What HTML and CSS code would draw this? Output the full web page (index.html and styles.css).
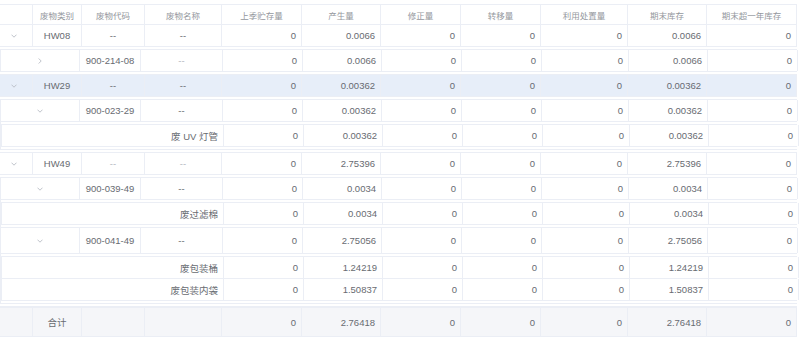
FILE: index.html
```html
<!DOCTYPE html>
<html lang="zh">
<head>
<meta charset="utf-8">
<link rel="stylesheet" href="styles.css">
</head>
<body>
<div class="table">
  <div class="row l1 head">
    <div class="c"></div><div class="c">废物类别</div><div class="c">废物代码</div><div class="c">废物名称</div>
    <div class="c">上季贮存量</div><div class="c">产生量</div><div class="c">修正量</div><div class="c">转移量</div><div class="c">利用处置量</div><div class="c">期末库存</div><div class="c">期末超一年库存</div>
  </div>

  <div class="row l1">
    <div class="c ic"><svg class="chev" viewBox="0 0 6 4"><path d="M0.5 0.7 L3 3.2 L5.5 0.7"/></svg></div><div class="c ctr">HW08</div><div class="c ctr">--</div><div class="c ctr">--</div>
    <div class="c n">0</div><div class="c n">0.0066</div><div class="c n">0</div><div class="c n">0</div><div class="c n">0</div><div class="c n">0.0066</div><div class="c n">0</div>
  </div>
  <div class="exp">
    <div class="sub">
      <div class="row l2">
        <div class="c ic"><svg class="chev r" viewBox="0 0 4 6"><path d="M0.7 0.5 L3.2 3 L0.7 5.5"/></svg></div><div class="c ctr">900-214-08</div><div class="c ctr lt">--</div>
        <div class="c n">0</div><div class="c n">0.0066</div><div class="c n">0</div><div class="c n">0</div><div class="c n">0</div><div class="c n">0.0066</div><div class="c n">0</div>
      </div>
    </div>
  </div>

  <div class="row l1 hl">
    <div class="c ic"><svg class="chev" viewBox="0 0 6 4"><path d="M0.5 0.7 L3 3.2 L5.5 0.7"/></svg></div><div class="c ctr">HW29</div><div class="c ctr">--</div><div class="c ctr">--</div>
    <div class="c n">0</div><div class="c n">0.00362</div><div class="c n">0</div><div class="c n">0</div><div class="c n">0</div><div class="c n">0.00362</div><div class="c n">0</div>
  </div>
  <div class="exp">
    <div class="sub">
      <div class="row l2">
        <div class="c ic"><svg class="chev" viewBox="0 0 6 4"><path d="M0.5 0.7 L3 3.2 L5.5 0.7"/></svg></div><div class="c ctr">900-023-29</div><div class="c ctr">--</div>
        <div class="c n">0</div><div class="c n">0.00362</div><div class="c n">0</div><div class="c n">0</div><div class="c n">0</div><div class="c n">0.00362</div><div class="c n">0</div>
      </div>
      <div class="exp">
        <div class="sub">
          <div class="row l3">
            <div class="c n">废 UV 灯管</div>
            <div class="c n">0</div><div class="c n">0.00362</div><div class="c n">0</div><div class="c n">0</div><div class="c n">0</div><div class="c n">0.00362</div><div class="c n">0</div>
          </div>
        </div>
      </div>
    </div>
  </div>

  <div class="row l1">
    <div class="c ic"><svg class="chev" viewBox="0 0 6 4"><path d="M0.5 0.7 L3 3.2 L5.5 0.7"/></svg></div><div class="c ctr">HW49</div><div class="c ctr lt">--</div><div class="c ctr lt">--</div>
    <div class="c n">0</div><div class="c n">2.75396</div><div class="c n">0</div><div class="c n">0</div><div class="c n">0</div><div class="c n">2.75396</div><div class="c n">0</div>
  </div>
  <div class="exp">
    <div class="sub">
      <div class="row l2">
        <div class="c ic"><svg class="chev" viewBox="0 0 6 4"><path d="M0.5 0.7 L3 3.2 L5.5 0.7"/></svg></div><div class="c ctr">900-039-49</div><div class="c ctr">--</div>
        <div class="c n">0</div><div class="c n">0.0034</div><div class="c n">0</div><div class="c n">0</div><div class="c n">0</div><div class="c n">0.0034</div><div class="c n">0</div>
      </div>
      <div class="exp">
        <div class="sub">
          <div class="row l3">
            <div class="c n">废过滤棉</div>
            <div class="c n">0</div><div class="c n">0.0034</div><div class="c n">0</div><div class="c n">0</div><div class="c n">0</div><div class="c n">0.0034</div><div class="c n">0</div>
          </div>
        </div>
      </div>
      <div class="row l2 tall">
        <div class="c ic"><svg class="chev" viewBox="0 0 6 4"><path d="M0.5 0.7 L3 3.2 L5.5 0.7"/></svg></div><div class="c ctr">900-041-49</div><div class="c ctr">--</div>
        <div class="c n">0</div><div class="c n">2.75056</div><div class="c n">0</div><div class="c n">0</div><div class="c n">0</div><div class="c n">2.75056</div><div class="c n">0</div>
      </div>
      <div class="exp">
        <div class="sub">
          <div class="row l3">
            <div class="c n">废包装桶</div>
            <div class="c n">0</div><div class="c n">1.24219</div><div class="c n">0</div><div class="c n">0</div><div class="c n">0</div><div class="c n">1.24219</div><div class="c n">0</div>
          </div>
          <div class="row l3">
            <div class="c n">废包装内袋</div>
            <div class="c n">0</div><div class="c n">1.50837</div><div class="c n">0</div><div class="c n">0</div><div class="c n">0</div><div class="c n">1.50837</div><div class="c n">0</div>
          </div>
        </div>
      </div>
    </div>
  </div>

  <div class="row l1 foot">
    <div class="c"></div><div class="c ctr">合计</div><div class="c"></div><div class="c"></div>
    <div class="c n">0</div><div class="c n">2.76418</div><div class="c n">0</div><div class="c n">0</div><div class="c n">0</div><div class="c n">2.76418</div><div class="c n">0</div>
  </div>
</div>
</body>
</html>
```

FILE: styles.css
```css
* { box-sizing: border-box; }
html, body { margin: 0; padding: 0; background: #fff; }
body {
  font-family: "Liberation Sans", "Noto Sans CJK SC", sans-serif;
  font-size: 9.5px;
  color: #686b71;
}
.table {
  width: 797px;
  margin-top: 4px;
  border-top: 1px solid #ebeef5;
}
.row {
  display: grid;
  height: 22px;
  border-bottom: 1px solid #ebeef5;
}
.l1 { grid-template-columns: 33px 49px 63px 77px 80px 79px 80px 80px 87px 79px 90px; }
.l2 { grid-template-columns: 79px 61px 82px 80px 79px 80px 80px 87px 79px 90px; }
.l3 { grid-template-columns: 222px 80px 79px 80px 80px 87px 79px 90px; }
.head {
  height: 20px;
  font-size: 8.5px;
  color: #94979d;
}
.head .c { justify-content: center; }
.c {
  display: flex;
  align-items: center;
  padding: 0 5px;
  border-right: 1px solid #ebeef5;
  white-space: nowrap;
  overflow: hidden;
}
.ctr { justify-content: center; }
.n { justify-content: flex-end; }
.lt { color: #b4b8bf; }
.ic { justify-content: center; padding: 0; }
.l1 .ic { padding-right: 5px; }
.chev {
  width: 6px;
  height: 4px;
  fill: none;
  stroke: #b8bcc4;
  stroke-width: 0.9;
}
.chev.r { width: 4px; height: 6px; }
.hl { background: #e7eef9; }
.exp {
  padding: 2px 0 2px;
  border-bottom: 1px solid #ebeef5;
}
.sub {
  border-top: 1px solid #ebeef5;
  border-left: 1px solid #ebeef5;
}
.sub .row .c:first-child { margin-left: -1px; }
.tall { height: 26px; }
.foot {
  height: 30px;
  margin-top: 0;
  border-top: 1px solid #ebeef5;
  background: #f5f6f9;
}
```
